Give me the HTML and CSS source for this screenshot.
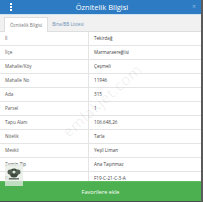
FILE: index.html
```html
<!DOCTYPE html>
<html>
<head>
<meta charset="utf-8">
<link rel="stylesheet" href="styles.css">
</head>
<body>
<div class="frame">
  <div class="modal">
    <header class="head">
      <span class="kebab"><i></i><i></i><i></i></span>
      <h1 class="title">Öznitelik Bilgisi</h1>
      <span class="close">×</span>
    </header>
    <nav class="tabs">
      <span class="tab active">Öznitelik Bilgisi</span>
      <span class="tab">Bina/BB Listesi</span>
    </nav>
    <div class="table">
      <div class="row"><span class="k">İl</span><span class="v">Tekirdağ</span></div>
      <div class="row"><span class="k">İlçe</span><span class="v">Marmaraereğlisi</span></div>
      <div class="row"><span class="k">Mahalle/Köy</span><span class="v">Çeşmeli</span></div>
      <div class="row"><span class="k">Mahalle No</span><span class="v">11946</span></div>
      <div class="row"><span class="k">Ada</span><span class="v">315</span></div>
      <div class="row"><span class="k">Parsel</span><span class="v">1</span></div>
      <div class="row"><span class="k">Tapu Alanı</span><span class="v">106.648,26</span></div>
      <div class="row"><span class="k">Nitelik</span><span class="v">Tarla</span></div>
      <div class="row"><span class="k">Mevkii</span><span class="v">Yeşil Liman</span></div>
      <div class="row"><span class="k">Zemin Tip</span><span class="v">Ana Taşınmaz</span></div>
      <div class="row"><span class="k">Pafta</span><span class="v">F19-C-21-C-3-A</span></div>
    </div>
    <div class="watermark">emlakjet.com</div>
    <div class="logo">
      <svg width="16" height="14" viewBox="0 0 16 14">
        <circle cx="8" cy="6" r="4.5" fill="#3d4a3d"/>
        <circle cx="4" cy="5" r="2.5" fill="#556055"/>
        <circle cx="12" cy="5" r="2.5" fill="#556055"/>
        <circle cx="8" cy="5" r="1.6" fill="#dfe8df"/>
        <rect x="3" y="11" width="10" height="1.5" fill="#6a756a"/>
      </svg>
    </div>
    <button class="fav">Favorilere ekle</button>
  </div>
  <div class="edge"></div>
</div>
</body>
</html>
```
FILE: styles.css
```css
html, body { margin: 0; padding: 0; }
body {
  width: 203px;
  height: 202px;
  overflow: hidden;
  font-family: "Open Sans", "Liberation Sans", sans-serif;
  background: #4a4a4a;
}
.frame {
  display: flex;
  height: 202px;
}
.modal {
  position: relative;
  width: 201px;
  height: 201px;
  background: #fff;
  overflow: hidden;
  display: flex;
  flex-direction: column;
}
.edge {
  width: 2px;
  background: #5a5a5a;
}
.head {
  height: 14px;
  background: #2d7bc3;
  display: flex;
  align-items: center;
  justify-content: space-between;
  padding: 0 5px 0 9px;
  border-bottom: 1px solid #cfe3f3;
}
.kebab {
  display: flex;
  flex-direction: column;
  gap: 1px;
  width: 3px;
  align-items: center;
}
.kebab i {
  display: block;
  width: 2px;
  height: 2px;
  background: #fff;
}
.title {
  margin: 0;
  font-size: 7.5px;
  font-weight: 400;
  color: #fff;
  line-height: 14px;
}
.close {
  color: #8fb8df;
  font-size: 7px;
  line-height: 14px;
}
.tabs {
  height: 16px;
  background: #f1f1f1;
  display: flex;
  align-items: flex-end;
  padding-left: 4px;
  border-bottom: 1px solid #dedede;
}
.tab {
  font-size: 4.6px;
  color: #6b8fb5;
  height: 13px;
  line-height: 13px;
  padding: 0 4px;
}
.tab.active {
  background: #fff;
  color: #777;
  border: 1px solid #dedede;
  border-bottom: none;
  margin-bottom: -1px;
  height: 14px;
  line-height: 14px;
  padding: 0 5px;
}
.table {
  display: flex;
  flex-direction: column;
}
.row {
  display: grid;
  grid-template-columns: 89px 1fr;
  height: 13px;
  border-bottom: 0.75px solid #e4e4e4;
  font-size: 4.6px;
  line-height: 13px;
  color: #555;
}
.row .k {
  padding-left: 5px;
  border-right: 1px solid #e4e4e4;
}
.row .v {
  padding-left: 5px;
  color: #444;
}
.watermark {
  position: absolute;
  left: 52px;
  top: 90px;
  transform: rotate(-42deg);
  font-size: 15px;
  color: rgba(0,0,0,0.07);
  letter-spacing: 0.5px;
}
.logo {
  position: absolute;
  left: 5px;
  top: 164px;
  width: 18px;
  height: 22px;
  background: rgba(230,236,230,0.75);
  display: flex;
  justify-content: center;
  padding-top: 3px;
  box-sizing: border-box;
  z-index: 2;
}
.fav {
  position: absolute;
  left: 0;
  right: 0;
  bottom: 0;
  height: 20px;
  background: #4caf50;
  border: none;
  border-top: 1px solid #5dbb60;
  color: #fff;
  font-family: inherit;
  font-size: 5.6px;
  padding: 0;
}
```
